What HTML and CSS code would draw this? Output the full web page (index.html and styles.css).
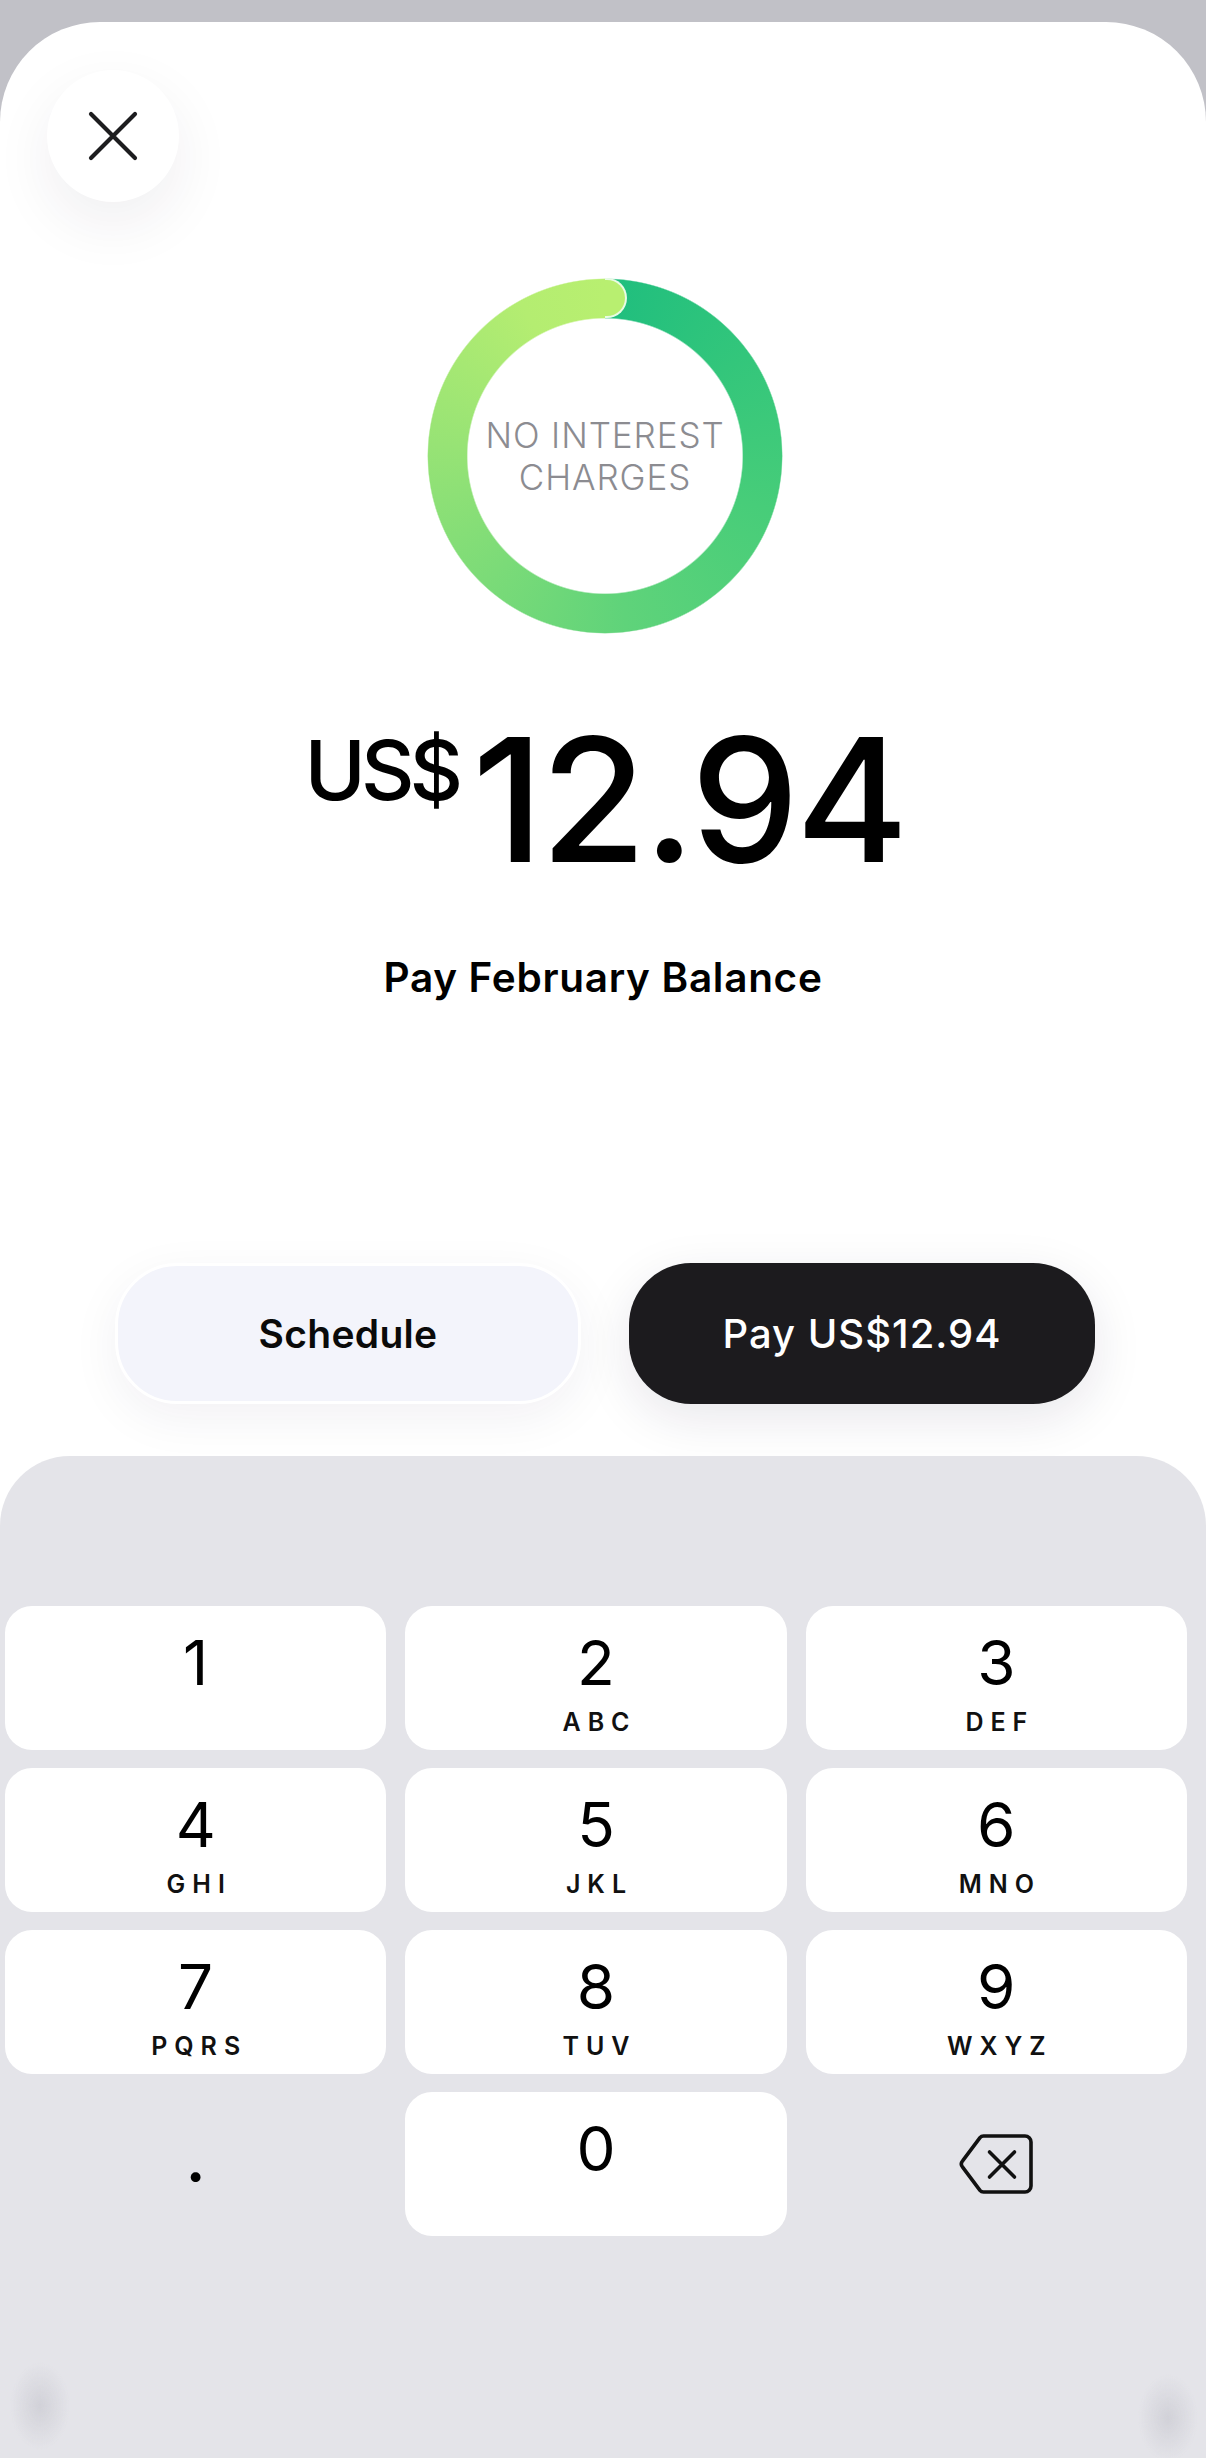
FILE: index.html
```html
<!DOCTYPE html>
<html lang="en">
<head>
<meta charset="utf-8">
<title>Pay February Balance</title>
<link rel="stylesheet" href="styles.css">
</head>
<body>
<div class="sheet">
  <div class="header">
    <button class="close-btn" aria-label="Close">
      <svg class="close-icon" viewBox="0 0 50 50" width="50" height="50">
        <path d="M3 3 L47 47 M47 3 L3 47" fill="none" stroke="#1d1d1f" stroke-width="4.2" stroke-linecap="round"/>
      </svg>
    </button>
  </div>

  <div class="ring-wrap">
    <div class="ring"></div>
    <div class="ring-cap"></div>
    <div class="ring-text">NO INTEREST<br>CHARGES</div>
  </div>

  <div class="amount">
    <span class="currency">US$</span>
    <span class="value">12.94</span>
  </div>

  <div class="subtitle">Pay February Balance</div>

  <div class="actions">
    <button class="btn btn-light">Schedule</button>
    <button class="btn btn-dark">Pay US$12.94</button>
  </div>

  <div class="keypad">
    <div class="keys">
      <div class="key"><span class="digit">1</span><span class="letters"></span></div>
      <div class="key"><span class="digit">2</span><span class="letters">ABC</span></div>
      <div class="key"><span class="digit">3</span><span class="letters">DEF</span></div>
      <div class="key"><span class="digit">4</span><span class="letters">GHI</span></div>
      <div class="key"><span class="digit">5</span><span class="letters">JKL</span></div>
      <div class="key"><span class="digit">6</span><span class="letters">MNO</span></div>
      <div class="key"><span class="digit">7</span><span class="letters">PQRS</span></div>
      <div class="key"><span class="digit">8</span><span class="letters">TUV</span></div>
      <div class="key"><span class="digit">9</span><span class="letters">WXYZ</span></div>
      <div class="key key-plain key-dot"><span class="digit">.</span><span class="letters"></span></div>
      <div class="key"><span class="digit">0</span><span class="letters"></span></div>
      <div class="key key-plain key-icon">
        <svg viewBox="0 0 74 60" width="74" height="60">
          <path d="M24.5 2 H66 A6 6 0 0 1 72 8 V52 A6 6 0 0 1 66 58 H24.5 A4.5 4.5 0 0 1 21 56.3 L3.6 33.2 A5 5 0 0 1 3.6 26.8 L21 3.7 A4.5 4.5 0 0 1 24.5 2 Z" fill="none" stroke="#111" stroke-width="3.6" stroke-linejoin="round"/>
          <path d="M30.5 18 L55.5 43 M55.5 18 L30.5 43" fill="none" stroke="#111" stroke-width="3.6" stroke-linecap="round"/>
        </svg>
      </div>
    </div>
  </div>
</div>
</body>
</html>
```

FILE: styles.css
```css
* {
  box-sizing: border-box;
}

html, body {
  margin: 0;
  padding: 0;
  height: 100%;
}

body {
  background: #c1c1c7;
  font-family: Inter, "Noto Sans", "Liberation Sans", sans-serif;
  color: #000;
  padding-top: 22px;
}

.sheet {
  background: #ffffff;
  border-radius: 100px 100px 0 0;
  min-height: 2436px;
  display: flex;
  flex-direction: column;
  align-items: center;
  overflow: hidden;
}

.header {
  align-self: stretch;
  padding: 48px 0 0 47px;
  display: flex;
}

.close-btn {
  width: 132px;
  height: 132px;
  border-radius: 50%;
  border: none;
  background: #ffffff;
  box-shadow: 0 22px 60px rgba(40, 30, 60, 0.07);
  display: flex;
  align-items: center;
  justify-content: center;
  padding: 0;
}

.close-icon {
  display: block;
}

.ring-wrap {
  position: relative;
  width: 356px;
  height: 356px;
  margin-top: 76px;
  margin-left: 4px;
  display: flex;
  align-items: center;
  justify-content: center;
}

.ring {
  position: absolute;
  inset: 0;
  border-radius: 50%;
  background: conic-gradient(from 0deg, #1fbe7e 0%, #33c67b 15%, #47cd79 30%, #5fd37a 48%, #7bdb78 62%, #97e375 76%, #b4ed71 92%, #b8ef70 100%);
  -webkit-mask: radial-gradient(circle closest-side, transparent 137px, #000 138.5px, #000 176.5px, transparent 178px);
  mask: radial-gradient(circle closest-side, transparent 137px, #000 138.5px, #000 176.5px, transparent 178px);
}

.ring-cap {
  position: absolute;
  left: 178px;
  top: 0;
  width: 22px;
  height: 40px;
  border-radius: 0 20px 20px 0;
  background: #b8ef70;
  border: 2px solid #e9fbe4;
  border-left: none;
}

.ring-text {
  position: relative;
  font-size: 35px;
  line-height: 42px;
  font-weight: 300;
  color: #8c8c91;
  text-align: center;
  letter-spacing: 0.9px;
}

.amount {
  display: flex;
  align-items: flex-start;
  margin-top: 79px;
  margin-left: 4px;
}

.currency {
  font-size: 83px;
  line-height: 1;
  font-weight: 500;
  letter-spacing: -5px;
  margin-top: 16px;
  margin-right: 14px;
}

.value {
  font-size: 172px;
  line-height: 1;
  font-weight: 500;
  letter-spacing: -3.2px;
}

.subtitle {
  font-size: 40.5px;
  line-height: 1;
  font-weight: 600;
  margin-top: 73px;
  letter-spacing: 0.7px;
}

.actions {
  display: flex;
  gap: 48px;
  margin-top: 264px;
  margin-left: 4px;
}

.btn {
  width: 466px;
  height: 141px;
  border-radius: 62px;
  font-family: Inter, "Noto Sans", "Liberation Sans", sans-serif;
  display: flex;
  align-items: center;
  justify-content: center;
  padding: 0;
}

.btn-light {
  background: #f3f4fb;
  border: 3px solid #ffffff;
  color: #0a0a0a;
  font-size: 39px;
  font-weight: 600;
  letter-spacing: 0.3px;
  box-shadow: 0 14px 50px rgba(30, 20, 60, 0.06);
}

.btn-dark {
  background: #1c1b1e;
  border: none;
  color: #ffffff;
  font-size: 40px;
  font-weight: 500;
  letter-spacing: 1px;
  box-shadow: 0 14px 50px rgba(30, 20, 60, 0.10);
}

.keypad {
  align-self: stretch;
  flex: 1;
  margin-top: 52px;
  background:
    radial-gradient(ellipse 30px 44px at 40px 950px, rgba(175, 175, 185, 0.35) 0, rgba(175, 175, 185, 0) 100%),
    radial-gradient(ellipse 30px 44px at calc(100% - 38px) 962px, rgba(175, 175, 185, 0.35) 0, rgba(175, 175, 185, 0) 100%),
    #e4e4e9;
  border-radius: 70px 70px 0 0;
  padding: 150px 19px 0 5px;
}

.keys {
  display: grid;
  grid-template-columns: repeat(3, 1fr);
  grid-auto-rows: 144px;
  column-gap: 19px;
  row-gap: 18px;
}

.key {
  background: #ffffff;
  border-radius: 27px;
  display: flex;
  flex-direction: column;
  align-items: center;
  padding-top: 26px;
}

.key-plain {
  background: transparent;
}

.key-dot {
  padding-top: 36px;
}

.key-icon {
  padding-top: 0;
  justify-content: center;
}

.key-icon svg {
  display: block;
}

.digit {
  font-size: 62px;
  line-height: 62px;
  height: 62px;
  font-weight: 400;
  color: #000;
}

.key-dot .digit {
  font-weight: 600;
}

.letters {
  margin-top: 16px;
  font-size: 25px;
  line-height: 25px;
  height: 25px;
  font-weight: 600;
  letter-spacing: 0.28em;
  margin-right: -0.28em;
  color: #111;
}
```
